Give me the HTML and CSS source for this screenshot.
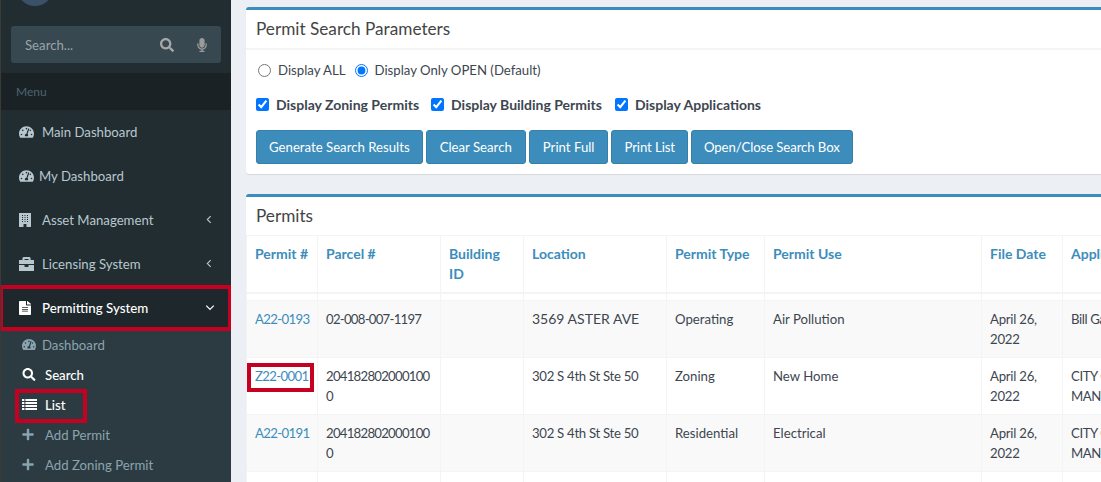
FILE: index.html
```html
<!DOCTYPE html>
<html lang="en">
<head>
<meta charset="utf-8">
<title>Permits</title>
<link rel="stylesheet" href="styles.css">
</head>
<body>
<div class="app">
  <aside class="sidebar">
    <div class="avatar"></div>
    <div class="search">
      <span class="search-text">Search...</span>
      <svg class="search-icon" viewBox="0 0 512 512"><path d="M505 442.700L405.300 343c-4.500-4.500-10.600-7-17-7H372c27.600-35.300 44-79.700 44-128C416 93.100 322.900 0 208 0S0 93.100 0 208s93.100 208 208 208c48.300 0 92.700-16.400 128-44v16.300c0 6.400 2.500 12.500 7 17l99.700 99.700c9.400 9.400 24.600 9.400 33.900 0l28.300-28.300c9.400-9.400 9.400-24.600.1-34zM208 336c-70.700 0-128-57.200-128-128 0-70.700 57.200-128 128-128 70.700 0 128 57.200 128 128 0 70.700-57.200 128-128 128z"/></svg>
      <svg class="mic-icon" viewBox="0 0 352 512"><path d="M176 352c53 0 96-43 96-96V96c0-53-43-96-96-96S80 43 80 96v160c0 53 43 96 96 96zm160-160h-16c-8.800 0-16 7.200-16 16v48c0 74.800-64.500 134.800-140.800 127.400C96.700 376.900 48 317.100 48 250.300V208c0-8.800-7.200-16-16-16H16c-8.800 0-16 7.200-16 16v40.200c0 89.600 64 169.600 152 181.700V464H96c-8.800 0-16 7.200-16 16v16c0 8.800 7.200 16 16 16h160c8.800 0 16-7.200 16-16v-16c0-8.800-7.200-16-16-16h-56v-33.800C285.700 418.500 352 344.900 352 256v-48c0-8.800-7.200-16-16-16z"/></svg>
    </div>
    <div class="menu-header">Menu</div>
    <nav class="nav">
      <a class="nav-item"><svg class="nav-icon" viewBox="0 0 576 512"><path d="M288 32C128.900 32 0 160.900 0 320c0 52.800 14.300 102.300 39.100 144.800 5.600 9.600 16.300 15.200 27.400 15.200h443c11.100 0 21.800-5.600 27.400-15.200C561.800 422.300 576 372.800 576 320c0-159.100-128.900-288-288-288zm0 64c14.700 0 26.600 10.100 30.300 23.700-1.100 2.300-2.600 4.200-3.500 6.700l-9.200 27.700c-5.100 3.500-11 6-17.600 6-17.700 0-32-14.300-32-32S270.300 96 288 96zM96 384c-17.700 0-32-14.300-32-32s14.300-32 32-32 32 14.300 32 32-14.300 32-32 32zm48-160c-17.700 0-32-14.300-32-32s14.300-32 32-32 32 14.300 32 32-14.300 32-32 32zm246.800-72.400l-61.300 184C343.100 347.300 352 364.500 352 384c0 11.700-3.400 22.600-8.900 32H232.900c-5.500-9.400-8.900-20.300-8.900-32 0-33.900 26.500-61.400 59.900-63.600l61.300-184c4.200-12.600 17.700-19.500 30.400-15.200 12.500 4.200 19.400 17.800 15.200 30.400zm14.700 57.200l15.500-46.600c3.500-1.300 7.100-2.200 11-2.200 17.700 0 32 14.300 32 32s-14.300 32-32 32c-11.400 0-20.900-6.300-26.500-15.200zM480 384c-17.700 0-32-14.300-32-32s14.300-32 32-32 32 14.300 32 32-14.300 32-32 32z"/></svg><span class="nav-label">Main Dashboard</span></a>
      <a class="nav-item nav-tight"><svg class="nav-icon" viewBox="0 0 576 512"><path d="M288 32C128.900 32 0 160.900 0 320c0 52.800 14.300 102.300 39.100 144.800 5.600 9.600 16.300 15.200 27.400 15.200h443c11.100 0 21.800-5.600 27.400-15.200C561.800 422.300 576 372.800 576 320c0-159.100-128.900-288-288-288zm0 64c14.700 0 26.600 10.100 30.300 23.700-1.100 2.300-2.600 4.200-3.500 6.700l-9.200 27.700c-5.100 3.500-11 6-17.600 6-17.700 0-32-14.300-32-32S270.300 96 288 96zM96 384c-17.700 0-32-14.300-32-32s14.300-32 32-32 32 14.300 32 32-14.300 32-32 32zm48-160c-17.700 0-32-14.300-32-32s14.300-32 32-32 32 14.300 32 32-14.300 32-32 32zm246.800-72.400l-61.300 184C343.100 347.300 352 364.500 352 384c0 11.700-3.400 22.600-8.900 32H232.900c-5.500-9.400-8.900-20.300-8.900-32 0-33.900 26.500-61.400 59.900-63.600l61.300-184c4.200-12.600 17.700-19.500 30.400-15.200 12.500 4.200 19.400 17.800 15.200 30.400zm14.700 57.200l15.500-46.600c3.500-1.300 7.100-2.200 11-2.200 17.700 0 32 14.300 32 32s-14.300 32-32 32c-11.400 0-20.900-6.300-26.500-15.200zM480 384c-17.700 0-32-14.300-32-32s14.300-32 32-32 32 14.300 32 32-14.300 32-32 32z"/></svg><span class="nav-label">My Dashboard</span></a>
      <a class="nav-item"><svg class="nav-icon icon-tall" viewBox="0 0 12 14" preserveAspectRatio="none"><path fill-rule="evenodd" d="M0 0h12v14H0zM3 2v1h1V2zM5.500 2v1h1V2zM8 2v1h1V2zM3 4v1h1V4zM5.500 4v1h1V4zM8 4v1h1V4zM3 6v1h1V6zM5.500 6v1h1V6zM8 6v1h1V6zM3 8v1h1V8zM5.500 8v1h1V8zM8 8v1h1V8zM4.500 11v3h3v-3z"/></svg><span class="nav-label">Asset Management</span><svg class="chev" viewBox="0 0 10 16"><path d="M8 2L2 8l6 6"/></svg></a>
      <a class="nav-item"><svg class="nav-icon" viewBox="0 0 512 512"><path d="M320 336c0 8.800-7.200 16-16 16h-96c-8.800 0-16-7.200-16-16v-48H0v144c0 25.600 22.400 48 48 48h416c25.600 0 48-22.400 48-48V288H320v48zm144-208h-80V80c0-25.600-22.400-48-48-48H176c-25.600 0-48 22.400-48 48v48H48c-25.600 0-48 22.400-48 48v80h512v-80c0-25.600-22.400-48-48-48zm-144 0H192V96h128v32z" transform="translate(-40 -40) scale(1.16)"/></svg><span class="nav-label">Licensing System</span><svg class="chev" viewBox="0 0 10 16"><path d="M8 2L2 8l6 6"/></svg></a>
      <a class="nav-item nav-active"><svg class="nav-icon icon-tall" viewBox="0 0 384 512" preserveAspectRatio="none"><path d="M224 136V0H24C10.700 0 0 10.700 0 24v464c0 13.300 10.700 24 24 24h336c13.300 0 24-10.700 24-24V160H248c-13.200 0-24-10.800-24-24zm64 236c0 6.600-5.400 12-12 12H108c-6.600 0-12-5.400-12-12v-8c0-6.600 5.400-12 12-12h168c6.600 0 12 5.400 12 12v8zm0-64c0 6.600-5.400 12-12 12H108c-6.600 0-12-5.400-12-12v-8c0-6.600 5.400-12 12-12h168c6.600 0 12 5.400 12 12v8zm0-72v8c0 6.600-5.400 12-12 12H108c-6.600 0-12-5.400-12-12v-8c0-6.600 5.400-12 12-12h168c6.600 0 12 5.400 12 12zm96-114.100v6.100H256V0h6.100c6.400 0 12.500 2.500 17 7l97.900 98c4.500 4.500 7 10.600 7 16.900z"/></svg><span class="nav-label">Permitting System</span><svg class="chev chev-down" viewBox="0 0 16 10"><path d="M2 2l6 6 6-6"/></svg></a>
    </nav>
    <ul class="subnav">
      <li class="sub-item sub-tight"><svg class="sub-icon" viewBox="0 0 576 512"><path d="M288 32C128.900 32 0 160.900 0 320c0 52.800 14.300 102.300 39.100 144.800 5.600 9.600 16.300 15.200 27.400 15.200h443c11.100 0 21.800-5.600 27.400-15.200C561.800 422.300 576 372.800 576 320c0-159.100-128.900-288-288-288zm0 64c14.700 0 26.600 10.100 30.300 23.700-1.100 2.300-2.600 4.200-3.500 6.700l-9.200 27.700c-5.100 3.500-11 6-17.600 6-17.700 0-32-14.300-32-32S270.300 96 288 96zM96 384c-17.700 0-32-14.300-32-32s14.300-32 32-32 32 14.300 32 32-14.300 32-32 32zm48-160c-17.700 0-32-14.300-32-32s14.300-32 32-32 32 14.300 32 32-14.300 32-32 32zm246.800-72.400l-61.300 184C343.100 347.300 352 364.500 352 384c0 11.700-3.400 22.600-8.900 32H232.900c-5.500-9.400-8.900-20.300-8.900-32 0-33.900 26.500-61.400 59.900-63.600l61.300-184c4.200-12.600 17.700-19.500 30.400-15.200 12.500 4.200 19.400 17.800 15.200 30.400zm14.700 57.200l15.500-46.600c3.500-1.300 7.100-2.200 11-2.200 17.700 0 32 14.300 32 32s-14.300 32-32 32c-11.400 0-20.900-6.300-26.500-15.200zM480 384c-17.700 0-32-14.300-32-32s14.300-32 32-32 32 14.300 32 32-14.300 32-32 32z"/></svg><span>Dashboard</span></li>
      <li class="sub-item sub-on"><svg class="sub-icon" viewBox="0 0 512 512"><path d="M505 442.700L405.300 343c-4.500-4.500-10.600-7-17-7H372c27.600-35.300 44-79.700 44-128C416 93.100 322.900 0 208 0S0 93.100 0 208s93.100 208 208 208c48.300 0 92.700-16.400 128-44v16.300c0 6.400 2.500 12.500 7 17l99.700 99.700c9.400 9.400 24.600 9.400 33.900 0l28.300-28.300c9.400-9.400 9.400-24.600.1-34zM208 336c-70.700 0-128-57.200-128-128 0-70.700 57.200-128 128-128 70.700 0 128 57.200 128 128 0 70.700-57.200 128-128 128z"/></svg><span>Search</span></li>
      <li class="sub-item sub-on sub-mark"><svg class="sub-icon sub-list" viewBox="0 0 15 11" preserveAspectRatio="none"><path d="M0 0h2.400v2H0zM3.400 0H15v2H3.400zM0 3h2.400v2H0zM3.400 3H15v2H3.400zM0 6h2.400v2H0zM3.400 6H15v2H3.400zM0 9h2.400v2H0zM3.400 9H15v2H3.400z"/></svg><span>List</span></li>
      <li class="sub-item"><svg class="sub-icon sub-plus" viewBox="0 0 448 512"><path d="M416 208H272V64c0-17.700-14.300-32-32-32h-32c-17.700 0-32 14.300-32 32v144H32c-17.700 0-32 14.300-32 32v32c0 17.700 14.300 32 32 32h144v144c0 17.700 14.300 32 32 32h32c17.700 0 32-14.300 32-32V304h144c17.700 0 32-14.300 32-32v-32c0-17.700-14.300-32-32-32z"/></svg><span>Add Permit</span></li>
      <li class="sub-item"><svg class="sub-icon sub-plus" viewBox="0 0 448 512"><path d="M416 208H272V64c0-17.700-14.300-32-32-32h-32c-17.700 0-32 14.300-32 32v144H32c-17.700 0-32 14.300-32 32v32c0 17.700 14.300 32 32 32h144v144c0 17.700 14.300 32 32 32h32c17.700 0 32-14.300 32-32V304h144c17.700 0 32-14.300 32-32v-32c0-17.700-14.300-32-32-32z"/></svg><span>Add Zoning Permit</span></li>
    </ul>
  </aside>
  <main class="content">
    <section class="card card-search">
      <h3 class="card-title">Permit Search Parameters</h3>
      <div class="card-body">
        <div class="radios">
          <label class="opt"><input type="radio" name="scope">Display ALL</label>
          <label class="opt"><input type="radio" name="scope" checked>Display Only OPEN (Default)</label>
        </div>
        <div class="checks">
          <label class="chk"><input type="checkbox" checked>Display Zoning Permits</label>
          <label class="chk chk-wide"><input type="checkbox" checked>Display Building Permits</label>
          <label class="chk"><input type="checkbox" checked>Display Applications</label>
        </div>
        <div class="buttons">
          <button class="btn">Generate Search Results</button>
          <button class="btn btn-roomy">Clear Search</button>
          <button class="btn btn-roomy">Print Full</button>
          <button class="btn btn-snug">Print List</button>
          <button class="btn btn-snug">Open/Close Search Box</button>
        </div>
      </div>
    </section>
    <section class="card card-table">
      <h3 class="card-title plain">Permits</h3>
      <table class="grid">
        <colgroup>
          <col class="c1"><col class="c2"><col class="c3"><col class="c4"><col class="c5"><col class="c6"><col class="c7"><col class="c8">
        </colgroup>
        <thead>
          <tr><th>Permit #</th><th>Parcel #</th><th>Building ID</th><th>Location</th><th>Permit Type</th><th>Permit Use</th><th>File Date</th><th>Applicant</th></tr>
          <tr class="spacer"><td></td><td></td><td></td><td></td><td></td><td></td><td></td><td></td></tr>
        </thead>
        <tbody>
          <tr class="odd"><td><a class="link">A22-0193</a></td><td class="num">02-008-007-1197</td><td></td><td class="caps">3569 ASTER AVE</td><td>Operating</td><td>Air Pollution</td><td class="date">April 26, 2022</td><td class="appl">Bill Gates</td></tr>
          <tr><td><a class="link link-mark">Z22-0001</a></td><td class="num">2041828020001000</td><td></td><td class="addr">302 S 4th St Ste 50</td><td>Zoning</td><td>New Home</td><td class="date">April 26, 2022</td><td class="appl">CITY OF MANITOWOC</td></tr>
          <tr class="odd"><td><a class="link">A22-0191</a></td><td class="num">2041828020001000</td><td></td><td class="addr">302 S 4th St Ste 50</td><td>Residential</td><td>Electrical</td><td class="date">April 26, 2022</td><td class="appl">CITY OF MANITOWOC</td></tr>
          <tr><td></td><td></td><td></td><td></td><td></td><td></td><td></td><td></td></tr>
        </tbody>
      </table>
    </section>
  </main>
</div>
</body>
</html>
```
FILE: styles.css
```css
*, *::before, *::after { box-sizing: border-box; }
html, body { margin: 0; height: 100%; overflow: hidden; }
body { font-family: "Lato", "Liberation Sans", sans-serif; font-size: 13.2px; color: #3d4650; background: #ecf0f5; }
.app { display: flex; height: 482px; overflow: hidden; }

.sidebar { width: 231px; flex: none; background: #222d32; border-left: 1px solid #3a3a36; overflow: hidden; }
.avatar { width: 36px; height: 36px; margin: -30px 0 0 16px; border-radius: 50%; background: #3b5069; }
.search { display: flex; align-items: center; height: 37px; margin: 20px 10px 0 10px; padding: 0 14px; background: #374850; border-radius: 3px; color: #9aa4a9; }
.search-text { flex: 1; }
.search-icon { width: 14px; height: 14px; fill: #a8a8a8; margin-right: 23px; }
.mic-icon { width: 10px; height: 14px; fill: #9a9a9a; }
.menu-header { height: 37px; margin-top: 10px; padding: 11px 15px 0; background: #1a2226; color: #4b646f; font-size: 12px; }
.nav-item { display: flex; align-items: center; height: 44px; padding: 0 15px 1px 18px; color: #b8c7ce; }
.nav-icon { width: 15px; height: 14px; fill: #b8c7ce; flex: none; }
.icon-tall { width: 12px; }
.nav-label { margin-left: 8px; }
.icon-tall + .nav-label { margin-left: 11px; }
.nav-tight .nav-label { margin-left: 5px; }
.chev { width: 6px; height: 9px; margin-left: auto; margin-right: 4px; fill: none; stroke: #b8c7ce; stroke-width: 2; }
.nav-active { margin-left: -1px; padding-left: 19px; background: #1e282c; color: #fff; font-weight: 500; font-size: 13.3px; outline: 4px solid #c60021; outline-offset: -3px; position: relative; z-index: 1; }
.nav-active .nav-icon { fill: #fff; }
.chev-down { width: 10px; height: 7px; stroke: #fff; margin-right: 1px; }
.subnav { list-style: none; margin: 0; padding: 0 0 0 21px; background: #2c3b41; height: 200px; }
.sub-item { display: flex; align-items: center; height: 30px; padding-bottom: 1px; color: #8aa4af; }
.sub-icon { width: 14px; height: 13px; fill: #8aa4af; flex: none; }
.sub-list { width: 15px; height: 11px; }
.sub-plus { width: 12px; }
.sub-item span { margin-left: 9px; }
.sub-item .sub-list + span { margin-left: 8px; }
.sub-item .sub-plus + span { margin-left: 11px; }
.sub-item.sub-tight span { margin-left: 6px; }
.sub-on { color: #fff; font-weight: 500; }
.sub-on .sub-icon { fill: #fff; }
.sub-mark { position: relative; }
.sub-mark::after { content: ""; position: absolute; left: -7px; top: -1px; width: 72px; height: 34px; border: 4px solid #c60021; }

.content { flex: 1; min-width: 0; padding: 7px 0 0 15px; overflow: hidden; }
.card { background: #fff; border-top: 3px solid #3c8dbc; border-radius: 3px 0 0 3px; width: 960px; box-shadow: 0 1px 1px rgba(0,0,0,.1); }
.card-search { height: 167px; }
.card-table { margin-top: 20px; height: 320px; }
.card-title { margin: 0; height: 40px; padding: 7px 10px 0; font-size: 17.2px; font-weight: 400; line-height: 24px; color: #444; border-bottom: 2px solid #f4f4f4; }
.card-title.plain { height: 38px; border-bottom: 0; }
.card-body { padding: 9px 10px 0; }
.radios { display: flex; align-items: center; height: 22px; margin-left: 1px; }
.opt { display: flex; align-items: center; margin-right: 8px; }
.opt input { width: 13px; height: 13px; margin: 0 7px 0 1px; }
.checks { display: flex; align-items: center; margin-top: 12px; height: 22px; }
.chk { display: flex; align-items: center; margin-right: 12px; font-size: 14px; font-weight: 700; }
.chk-wide { margin-right: 13px; }
.chk input { width: 13px; height: 13px; margin: 0 7px 0 0; }
.buttons { display: flex; gap: 3px; margin-top: 15px; }
.btn { height: 34px; padding: 0 12px; background: #3c8dbc; color: #fff; border: 1px solid #367fa9; border-radius: 3px; font: inherit; }
.btn-roomy { padding: 0 13px; }
.btn-snug { letter-spacing: -.1px; }

.grid { border-collapse: collapse; table-layout: fixed; width: 936px; }
.c1 { width: 71px; } .c2 { width: 123px; } .c3 { width: 83px; } .c4 { width: 143px; } .c5 { width: 98px; } .c6 { width: 217px; } .c7 { width: 81px; } .c8 { width: 120px; }
.grid th, .grid td { border: 1px solid #f4f4f4; padding: 8px; vertical-align: top; line-height: 20px; text-align: left; overflow-wrap: anywhere; }
.grid th { color: #3c8dbc; font-size: 14px; font-weight: 700; height: 57px; border-bottom-width: 2px; }
.grid .spacer td { height: 7px; padding: 0; }
.grid tbody td { height: 57px; }
.odd td { background: #f9f9f9; }
.num { letter-spacing: -.75px; }
.caps { font-size: 14px; }
.addr { letter-spacing: -.3px; }
.date { letter-spacing: -.25px; }
.appl { letter-spacing: -.4px; }
.link { color: #3c8dbc; white-space: nowrap; letter-spacing: -.65px; }
.link-mark { position: relative; }
.link-mark::after { content: ""; position: absolute; left: -8px; top: -5px; width: 67px; height: 29px; border: 4px solid #c60021; }
```
